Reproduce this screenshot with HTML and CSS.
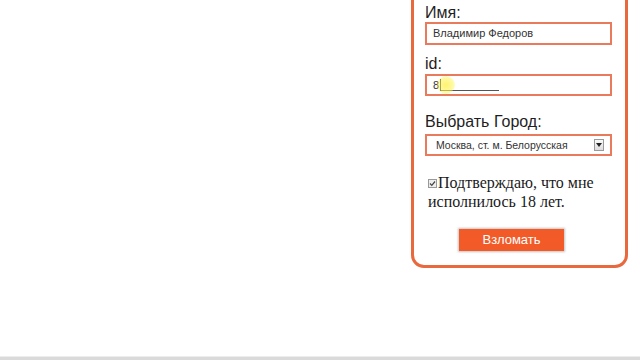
FILE: index.html
```html
<!DOCTYPE html>
<html lang="ru">
<head>
    <meta charset="UTF-8">
    <meta name="viewport" content="width=device-width, initial-scale=1.0">
    <title>Форма</title>
    <link rel="stylesheet" href="styles.css">
</head>
<body>
    <div class="page">
        <form class="box">
            <div class="label">Имя:</div>
            <div class="field">Владимир Федоров</div>

            <div class="label label_id">id:</div>
            <div class="field field_id">
                <span class="typed">8</span><span class="caret"></span><span class="line"></span>
                <span class="pointer"></span>
            </div>

            <div class="label label_city">Выбрать Город:</div>
            <div class="field select">
                <span>Москва, ст. м. Белорусская</span>
                <span class="arrow">
                    <svg width="6" height="4" viewBox="0 0 6 4"><path d="M0 0H6L3 4Z" fill="#222"/></svg>
                </span>
            </div>

            <div class="agree">
                <span class="check">
                    <svg width="9" height="9" viewBox="0 0 9 9">
                        <rect x="0.5" y="0.5" width="8" height="8" fill="#eee" stroke="#999"/>
                        <path d="M2 4.5L3.8 6.3L7 2.5" fill="none" stroke="#444" stroke-width="1.2"/>
                    </svg>
                </span>Подтверждаю, что мне исполнилось 18 лет.
            </div>

            <div class="btn">Взломать</div>
        </form>
    </div>
    <div class="status"></div>
</body>
</html>
```

FILE: styles.css
```css
html, body{
    margin:0;
    height:100%;
    background:#fff;
    overflow:hidden;
}

body{
    display:flex;
    flex-direction:column;
}

.page{
    flex:1;
    display:flex;
    justify-content:flex-end;
    align-items:flex-start;
    padding-right:12px;
}

.box{
    width:187px;
    margin-top:-30px;
    padding:31px 13px 14px 11px;
    border:3px solid #e8693e;
    border-radius:13px;
    font-family:"Liberation Sans", Arial, sans-serif;
}

.label{
    font-size:16px;
    line-height:18px;
    color:#1e1e1e;
}

.label_id{
    margin-top:10px;
    margin-bottom:1px;
}

.label_city{
    margin-top:17px;
    margin-bottom:3px;
}

.field{
    position:relative;
    box-sizing:border-box;
    height:23px;
    border:2px solid #ea7a5c;
    padding-left:6px;
    font-size:11px;
    line-height:19px;
    color:#333;
    display:flex;
    align-items:center;
}

.field_id{
    height:22px;
    padding-left:6px;
}

.typed{
    font-size:11px;
}

.caret{
    width:1px;
    height:12px;
    background:#333;
    margin-left:1px;
}

.line{
    width:58px;
    height:1px;
    background:#555;
    align-self:flex-end;
    margin-bottom:3px;
}

.pointer{
    position:absolute;
    left:10px;
    top:0px;
    width:18px;
    height:18px;
    border-radius:50%;
    background:radial-gradient(circle, rgba(255,240,60,0.75) 0%, rgba(255,245,90,0.55) 55%, rgba(255,255,150,0) 100%);
}

.select{
    height:22px;
    padding-left:9px;
    padding-right:6px;
    justify-content:space-between;
    font-size:10.5px;
}

.arrow{
    width:10px;
    height:12px;
    box-sizing:border-box;
    border:1px solid #9a9a9a;
    background:linear-gradient(#fafafa, #ddd);
    display:flex;
    align-items:center;
    justify-content:center;
}

.agree{
    margin-top:17px;
    padding-left:3px;
    font-family:"Liberation Serif", "Times New Roman", serif;
    font-size:16px;
    line-height:19px;
    color:#1a1a1a;
}

.check{
    display:inline-block;
    width:9px;
    height:9px;
    margin-right:1px;
    vertical-align:0px;
}

.check svg{
    display:block;
}

.btn{
    width:105px;
    height:22px;
    margin-top:18px;
    margin-left:34px;
    background:#f25a28;
    color:#fff;
    font-size:13px;
    line-height:22px;
    text-align:center;
    box-shadow:0 0 2px 1px rgba(120,120,120,0.45);
}

.status{
    height:3px;
    background:#dadada;
    border-top:1px solid #ededed;
}
```
